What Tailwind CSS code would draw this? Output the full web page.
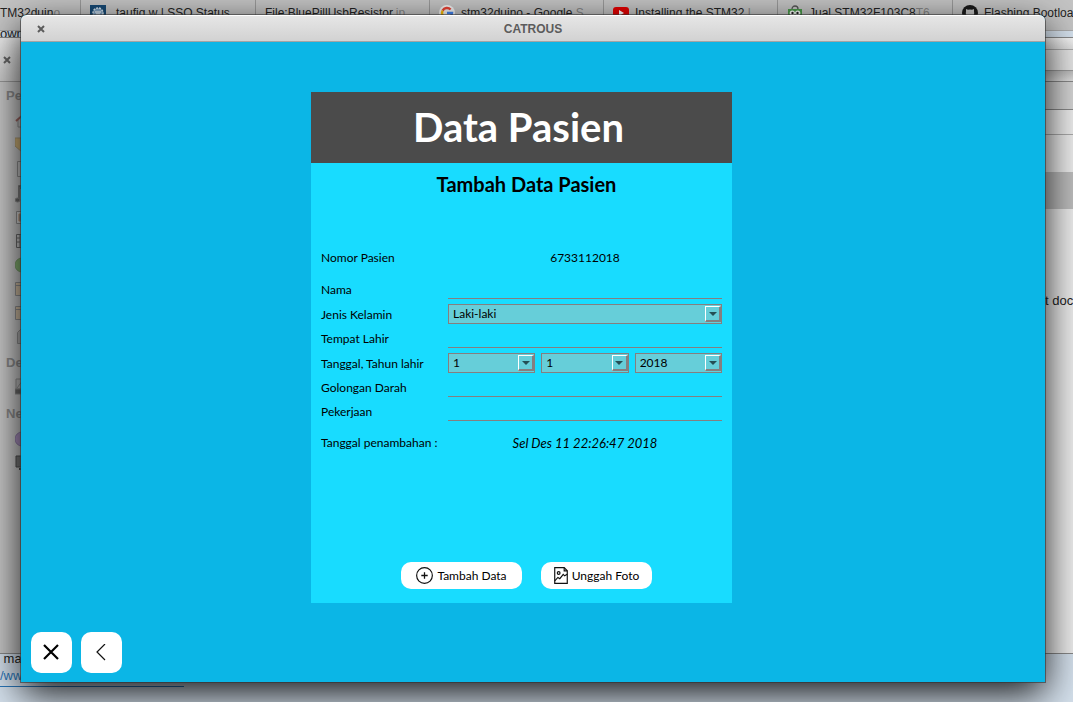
<!DOCTYPE html>
<html lang="id">
<head>
<meta charset="utf-8">
<meta name="viewport" content="width=device-width, initial-scale=1">
<title>CATROUS</title>
<script src="https://cdn.jsdelivr.net/npm/@tailwindcss/browser@4"></script>
</head>
<body class="relative h-screen overflow-hidden bg-[#d4e0ec] font-['Liberation_Sans',sans-serif] text-[13px] text-[#222]">

<!-- Browser tabs behind everything -->
<nav class="flex h-[30px] bg-[#c4c4c4] text-[12px] leading-[26px] whitespace-nowrap">
  <a href="#" class="w-[81px] shrink-0 overflow-hidden border-r border-[#999]">TM32duin<span class="text-[#222]/40">o</span></a>
  <a href="#" class="flex w-[175px] shrink-0 gap-2.5 overflow-hidden border-r border-[#999] pl-[9px]">
    <svg class="mt-[5px] h-4 w-4 shrink-0" viewBox="0 0 16 16"><rect width="16" height="16" fill="#174a75"/><circle cx="8" cy="8" r="5" fill="#7ea3c4" stroke="#d7e3ee" stroke-width="1.5" stroke-dasharray="2 1"/><path d="M5 7h6M6 9h4" stroke="#fff"/></svg>taufiq.w | SSO Status</a>
  <a href="#" class="w-[174px] shrink-0 overflow-hidden border-r border-[#999] pl-[9px]">File:BluePillUsbResistor<span class="text-[#222]/40">.jp</span></a>
  <a href="#" class="flex w-[174px] shrink-0 gap-1.5 overflow-hidden border-r border-[#999] pl-[9px]">
    <svg class="mt-[5px] h-4 w-4 shrink-0" viewBox="0 0 16 16"><circle cx="8" cy="8" r="8" fill="#f4f4f4"/><g fill="none" stroke-width="2.4"><path d="M3.6 5.6A5 5 0 0 1 11.6 4.5" stroke="#ea4335"/><path d="M3.6 10.4A5 5 0 0 1 3.6 5.6" stroke="#fbbc05"/><path d="M11.4 11.6A5 5 0 0 1 3.6 10.4" stroke="#34a853"/><path d="M8 8h5a5 5 0 0 1-1.6 3.6" stroke="#4285f4"/></g></svg><span>stm32duino - Google <span class="text-[#222]/40">S</span></span></a>
  <a href="#" class="flex w-[174px] shrink-0 gap-1.5 overflow-hidden border-r border-[#999] pl-[9px]">
    <svg class="mt-[5px] h-4 w-4 shrink-0" viewBox="0 0 16 16"><rect y="2" width="16" height="12" rx="3" fill="#e60000"/><path d="M6 5v6l5-3z" fill="#fff"/></svg><span>Installing the STM32 <span class="text-[#222]/40">L</span></span></a>
  <a href="#" class="flex w-[175px] shrink-0 gap-1.5 overflow-hidden border-r border-[#999] pl-[9px]">
    <svg class="mt-[5px] h-4 w-4 shrink-0" viewBox="0 0 16 16"><path d="M5 4a3 3 0 0 1 6 0" fill="none" stroke="#555" stroke-width="1.3"/><path d="M1 4h14v11H1z" fill="#4b9a4b"/><circle cx="5.3" cy="8" r="2.6" fill="#fff"/><circle cx="10.7" cy="8" r="2.6" fill="#fff"/><circle cx="5.5" cy="8" r="1.2" fill="#222"/><circle cx="10.5" cy="8" r="1.2" fill="#222"/></svg><span>Jual STM32F103C8<span class="text-[#222]/40">T6</span></span></a>
  <a href="#" class="flex flex-1 gap-1.5 overflow-hidden pl-[9px]">
    <svg class="mt-[5px] h-4 w-4 shrink-0" viewBox="0 0 16 16"><circle cx="8" cy="8" r="8" fill="#1b1b1b"/><path d="M4 4l2 .8q2-.5 4 0L12 4v2.500q1 4-2.500 4.500v4h-3v-4Q3 10.500 4 6.500z" fill="#c4c4c4"/></svg>Flashing Bootloa</a>
</nav>
<div class="h-[7px] border-t border-[#aaa] bg-[#d4e0ec] leading-[5px]">own</div>

<!-- Web page text under the windows -->
<div class="absolute top-[650px] left-0 w-[184px] overflow-hidden border-b border-[#2a76b9] pb-0.5 leading-[17px] whitespace-nowrap">
  <p>&nbsp;ma</p>
  <a href="#" class="text-[#2a76b9]">/www</a>
</div>

<!-- File manager window -->
<section class="absolute inset-x-0 top-[37px] bottom-[48px] flex justify-between border-y border-[#888] bg-[#ececec]">
  <aside class="w-[60px] bg-[#c8c8c8] font-bold text-[#888]">
    <div class="flex h-11 items-center border-b border-[#999] bg-linear-to-b from-[#eee] to-[#ccc] pl-[3px]">
      <svg class="h-2 w-2" viewBox="0 0 8 8"><path d="M1 1l6 6M7 1L1 7" stroke="#666" stroke-width="2"/></svg>
    </div>
    <p class="pt-[5px] pl-1.5 leading-[17px]">Personal</p>
    <svg class="ml-[15px] h-[250px] w-[18px] opacity-70" viewBox="0 0 18 250" fill="none" stroke="#777">
      <path d="M3 16v7h12v-7"/><path d="M1 17l8-7 8 7" stroke="#8b3b35" stroke-width="2"/>
      <path d="M0 34h6l6 2v8l-5 4-7-6z" fill="#d2aa58" stroke="#a08550"/>
      <path d="M2.500 57.500h13v15h-13z" fill="#ccc"/>
      <path d="M4 96V82h8v12M5 84h7" stroke="#444" stroke-width="1.500"/><ellipse cx="2.500" cy="96" rx="2.500" ry="2" fill="#444"/>
      <path d="M1.500 107.500h14v12h-14z" fill="#ddd"/><path d="M4 110h8v7H4z" fill="#53799b" stroke="#c17b42"/>
      <path d="M1.500 130.500h14v13h-14zM5 130v14M1 134h4M1 138h4" stroke="#444"/>
      <circle cx="7" cy="161" r="7" fill="#69a84d" stroke="#568743"/>
      <path d="M.5 178.500h14v13H.5zM.5 202.500h14v13H.5z" fill="#d5bb95"/><path d="M.5 181.500h14M.5 205.500h14"/>
      <path d="M2.500 228.500l3-3h8v14h-11z" fill="#aaa"/>
    </svg>
    <p class="pl-1.5 leading-[17px]">Devices</p>
    <svg class="ml-[15px] h-[34px] w-[18px] opacity-70" viewBox="0 0 18 34"><path d="M1 8h14v10H1z" fill="#bbb" stroke="#777"/><path d="M2 17l6-8M0 18h16v5H0z" fill="#444" stroke="#777"/></svg>
    <p class="pl-1.5 leading-[17px]">Network</p>
    <svg class="ml-[15px] h-[50px] w-[18px] opacity-80" viewBox="0 0 18 50"><circle cx="7" cy="17" r="7" fill="#a283bb" stroke="#7d679a"/><path d="M1 34h14v11H1z" fill="#666" stroke="#333"/><path d="M4 47h8" stroke="#333" stroke-width="2"/></svg>
  </aside>
  <div class="w-[60px] leading-[17px]">
    <div class="h-3 border-b border-[#aaa] bg-linear-to-b from-[#f4f4f4] to-[#ddd]"></div>
    <div class="h-[21px] border-b border-[#999] bg-[#e4e4e4]"></div>
    <div class="h-[11px] border-b border-[#888] bg-linear-to-b from-[#bbb] to-[#ddd]"></div>
    <div class="h-7 border-b border-[#888] bg-[#d4d4d4]"></div>
    <div class="h-[25px] border-b border-[#aaa] bg-[#ececec]"></div>
    <div class="mt-[37px] h-[37px] bg-[#bdbdbd]"></div>
    <p class="mt-[83px] pl-8 whitespace-nowrap">t doc</p>
  </div>
</section>

<!-- Application window -->
<main class="absolute top-[15px] right-[28px] bottom-5 left-[21px] flex flex-col rounded-t-md bg-[#0bb6e6] shadow-[0_0_0_1px_rgba(50,50,50,0.6),0_12px_38px_rgba(0,0,0,0.9)]">
  <header class="flex h-[27px] shrink-0 items-center rounded-t-md border-t border-b border-t-white border-b-[#a3a3a3] bg-linear-to-b from-[#e6e6e6] to-[#d2d2d2] px-4">
    <button type="button" aria-label="Tutup jendela" class="flex w-2 justify-center">
      <svg class="h-2 w-2" viewBox="0 0 8 8"><path d="M1 1l6 6M7 1L1 7" stroke="#5c5c5c" stroke-width="2"/></svg>
    </button>
    <h1 class="flex-1 pr-2 text-center text-[12px] font-bold text-[#5c5c5c]">CATROUS</h1>
  </header>

  <div class="flex flex-1 justify-center pt-[50px] pr-[23px]">
    <form class="flex h-[511px] w-[421px] flex-col bg-[#18dcff] font-['Trebuchet_MS',Lato,sans-serif] text-[12px] text-black">
      <h2 class="flex h-[71px] items-center justify-center bg-[#4b4b4b] pr-1.5 pb-0.5 text-[40px] font-bold text-white">Data Pasien</h2>
      <h3 class="pt-[7px] pl-2.5 text-center text-[20px] leading-7 font-bold">Tambah Data Pasien</h3>

      <div class="mt-[50px] grid grid-cols-[127px_1fr] px-2.5 leading-5">
        <span>Nomor Pasien</span>
        <output class="text-center">6733112018</output>
      </div>

      <div class="mt-3 grid grid-cols-[127px_1fr] items-center gap-y-[5px] px-2.5 leading-[19px]">
        <label for="nama">Nama</label>
        <input id="nama" type="text" class="h-[19px] w-full border-b border-[#847f80] bg-transparent px-1 outline-none">

        <label for="kelamin">Jenis Kelamin</label>
        <div class="relative">
          <select id="kelamin" class="block h-5 w-full appearance-none border border-[#847f80] bg-[#66ced9] pl-1 leading-[18px]"><option>Laki-laki</option><option>Perempuan</option></select>
          <span class="pointer-events-none absolute top-0.5 right-px flex h-4 w-4 items-center justify-center border-t border-r-2 border-b-2 border-l border-t-white border-r-[#847f80] border-b-[#847f80] border-l-white bg-[#66ced9]"><svg class="h-1 w-2" viewBox="0 0 8 4"><path d="M0 0h8L4 4z" fill="#244f55"/></svg></span>
        </div>

        <label for="tempat">Tempat Lahir</label>
        <input id="tempat" type="text" class="h-[19px] w-full border-b border-[#847f80] bg-transparent px-1 outline-none">

        <label for="tanggal">Tanggal, Tahun lahir</label>
        <div class="grid grid-cols-3 gap-1.5">
          <div class="relative">
            <select id="tanggal" class="block h-5 w-full appearance-none border border-[#847f80] bg-[#66ced9] pl-1 leading-[18px]"><option>1</option><option>2</option></select>
            <span class="pointer-events-none absolute top-0.5 right-px flex h-4 w-4 items-center justify-center border-t border-r-2 border-b-2 border-l border-t-white border-r-[#847f80] border-b-[#847f80] border-l-white bg-[#66ced9]"><svg class="h-1 w-2" viewBox="0 0 8 4"><path d="M0 0h8L4 4z" fill="#244f55"/></svg></span>
          </div>
          <div class="relative">
            <select aria-label="Bulan lahir" class="block h-5 w-full appearance-none border border-[#847f80] bg-[#66ced9] pl-1 leading-[18px]"><option>1</option><option>2</option></select>
            <span class="pointer-events-none absolute top-0.5 right-px flex h-4 w-4 items-center justify-center border-t border-r-2 border-b-2 border-l border-t-white border-r-[#847f80] border-b-[#847f80] border-l-white bg-[#66ced9]"><svg class="h-1 w-2" viewBox="0 0 8 4"><path d="M0 0h8L4 4z" fill="#244f55"/></svg></span>
          </div>
          <div class="relative">
            <select aria-label="Tahun lahir" class="block h-5 w-full appearance-none border border-[#847f80] bg-[#66ced9] pl-1 leading-[18px]"><option>2018</option><option>2017</option></select>
            <span class="pointer-events-none absolute top-0.5 right-px flex h-4 w-4 items-center justify-center border-t border-r-2 border-b-2 border-l border-t-white border-r-[#847f80] border-b-[#847f80] border-l-white bg-[#66ced9]"><svg class="h-1 w-2" viewBox="0 0 8 4"><path d="M0 0h8L4 4z" fill="#244f55"/></svg></span>
          </div>
        </div>

        <label for="darah">Golongan Darah</label>
        <input id="darah" type="text" class="h-[19px] w-full border-b border-[#847f80] bg-transparent px-1 outline-none">

        <label for="kerja">Pekerjaan</label>
        <input id="kerja" type="text" class="h-[19px] w-full border-b border-[#847f80] bg-transparent px-1 outline-none">
      </div>

      <div class="mt-3 grid grid-cols-[127px_1fr] px-2.5 leading-5">
        <span>Tanggal penambahan :</span>
        <output class="text-center text-[13px] italic">Sel Des 11 22:26:47 2018</output>
      </div>

      <div class="mt-auto mb-3.5 flex justify-center gap-[19px] pl-2.5">
        <button type="button" class="flex h-[27px] w-[121px] items-center justify-center gap-1 rounded-[10px] bg-white">
          <svg class="h-[17px] w-[17px]" viewBox="0 0 16 16" fill="none" stroke="#111"><circle cx="8" cy="8" r="7.400" stroke-width="1.100"/><path d="M8 5v6M5 8h6" stroke-width="1.200"/></svg>Tambah Data</button>
        <button type="button" class="flex h-[27px] w-[111px] items-center justify-center gap-1 rounded-[10px] bg-white">
          <svg class="h-[17px] w-[14px]" viewBox="0 0 13 16" fill="none" stroke="#111" stroke-width="1.100"><path d="M.6.600h8.900l2.900 3v11.800H.6z"/><path d="M9.500.600v3h2.900"/><circle cx="4.300" cy="5.600" r="1.300"/><path d="M.6 13l3-3.200 1.800 1.200 3.200-4 1.300 1.300 2.500-1.500"/></svg>Unggah Foto</button>
      </div>
    </form>
  </div>

  <footer class="flex gap-[9px] px-2.5 pb-[9px]">
    <button type="button" aria-label="Keluar" class="flex h-[41px] w-[41px] items-center justify-center rounded-[10px] bg-white">
      <svg class="h-[17px] w-[17px]" viewBox="0 0 17 17"><path d="M1 1l14 14M15 1L1 15" stroke="#000" stroke-width="2.200"/></svg>
    </button>
    <button type="button" aria-label="Kembali" class="flex h-[41px] w-[41px] items-center justify-center rounded-[10px] bg-white">
      <svg class="h-[17px] w-[17px]" viewBox="0 0 17 17"><path d="M12 0L4 8l8 8" fill="none" stroke="#111" stroke-width="1.200"/></svg>
    </button>
  </footer>
</main>
</body>
</html>
